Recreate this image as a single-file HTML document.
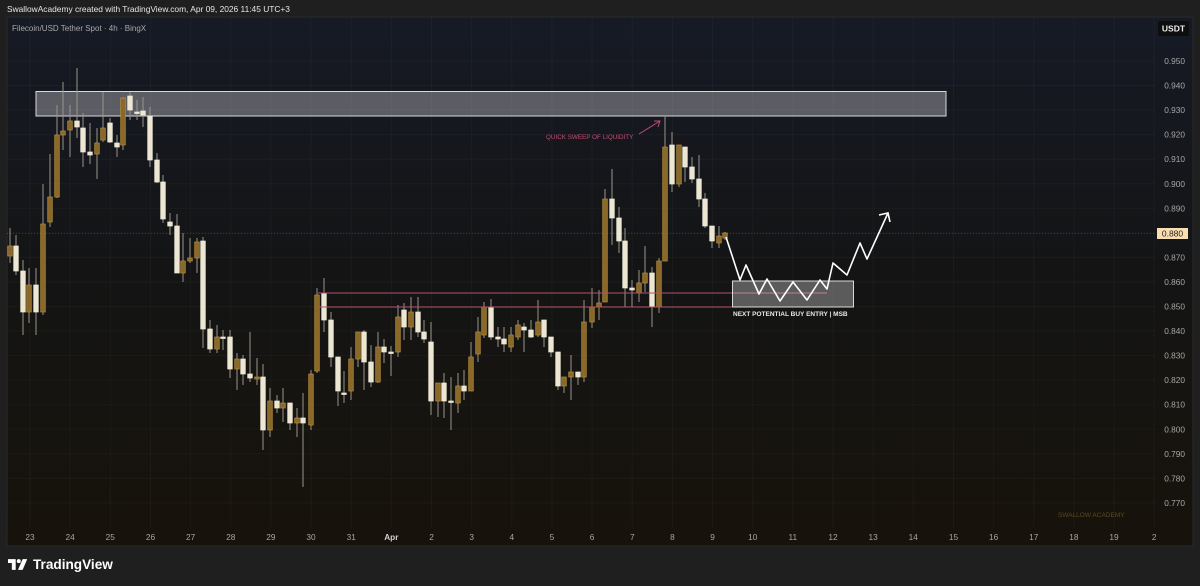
<!DOCTYPE html>
<html><head><meta charset="utf-8">
<style>
html,body{margin:0;padding:0;width:1200px;height:586px;overflow:hidden;background:#1f1f1f;font-family:"Liberation Sans",sans-serif}
#hdr{position:absolute;left:7px;top:4px;font-size:8.4px;color:#e6e6e6}
#logo{position:absolute;left:8px;top:557px;color:#fff;font-weight:bold;font-size:13.6px;display:flex;align-items:center;gap:5px}
</style></head><body>
<div id="hdr">SwallowAcademy created with TradingView.com, Apr 09, 2026 11:45 UTC+3</div>
<svg id="c" width="1200" height="586" style="position:absolute;left:0;top:0" xmlns="http://www.w3.org/2000/svg">
<defs>
<linearGradient id="bg" x1="0" y1="0" x2="0" y2="1">
<stop offset="0" stop-color="#161a25"/><stop offset="0.5" stop-color="#141414"/><stop offset="1" stop-color="#17130b"/>
</linearGradient>
</defs>
<rect x="7" y="17" width="1186" height="529" fill="url(#bg)" stroke="#2a2a2a"/>
<g id="grid" stroke="#ffffff" stroke-opacity="0.03" stroke-width="1"></g>
<text x="12" y="31" font-size="8" fill="#a8a8a8" font-family="Liberation Sans">Filecoin/USD Tether Spot · 4h · BingX</text>
<line x1="7" y1="233.5" x2="1155" y2="233.5" stroke="#f5d9a8" stroke-opacity="0.18" stroke-dasharray="1 2"/>
<rect x="36" y="91.5" width="910" height="24.5" fill="#cfcfd4" fill-opacity="0.38" stroke="#d8d8d8" stroke-width="1"/>
<g id="cand"></g>
<line x1="318" y1="293" x2="827" y2="293" stroke="#b4506c" stroke-width="1"/>
<line x1="318" y1="307" x2="733" y2="307" stroke="#b4506c" stroke-width="1"/>
<rect x="732.5" y="281" width="121" height="26" fill="#cfcfd4" fill-opacity="0.38" stroke="#d8d8d8"/>
<text x="733" y="316" font-size="6.5" font-weight="bold" fill="#e8e8e8" font-family="Liberation Sans">NEXT POTENTIAL BUY ENTRY | MSB</text>
<polyline points="726,237 740,280 746,265 759,294 767,279 780,301 793,282 807,300 820,280 827,289 833,263 847,275 860,243 867,259 888,213" fill="none" stroke="#fff" stroke-width="1.6" stroke-linejoin="round"/>
<polyline points="879,215 888,213 890,222" fill="none" stroke="#fff" stroke-width="1.6"/>
<text x="546" y="139" font-size="6.3" fill="#c54a72" font-family="Liberation Sans">QUICK SWEEP OF LIQUIDITY</text>
<line x1="639" y1="134" x2="660" y2="121" stroke="#c54a72" stroke-width="1"/>
<polyline points="654,121 660,121 658,127" fill="none" stroke="#c54a72" stroke-width="1"/>
<text x="1058" y="517" font-size="6.5" fill="#5c4820" font-family="Liberation Sans">SWALLOW ACADEMY</text>
<g id="axis" font-family="Liberation Sans" font-size="8.3" fill="#a6a6a6"></g>
<rect x="1157" y="228" width="31" height="11" fill="#f8ddb0"/>
<text x="1172.5" y="236.5" font-size="8.5" fill="#222" text-anchor="middle" font-family="Liberation Sans">0.880</text>
<rect x="1158" y="21" width="31" height="15" rx="2" fill="#0e0e0e"/>
<text x="1173.5" y="31.5" font-size="8.5" fill="#eee" text-anchor="middle" font-family="Liberation Sans" font-weight="bold">USDT</text>
</svg>
<div id="logo"><svg width="20" height="11" viewBox="0 0 26 14"><path d="M0 0H10V14H5V5H0Z" fill="#fff"/><circle cx="14" cy="2.6" r="2.6" fill="#fff"/><path d="M19 0H25L19 14H13Z" fill="#fff"/></svg><span>TradingView</span></div>
<script>
const NS="http://www.w3.org/2000/svg";
function el(p,t,a,txt){const e=document.createElementNS(NS,t);for(const k in a)e.setAttribute(k,a[k]);if(txt!==undefined)e.textContent=txt;p.appendChild(e);return e;}
const grid=document.getElementById('grid'),axis=document.getElementById('axis'),cand=document.getElementById('cand');
for(let i=0;i<19;i++){const p=0.95-i*0.01,y=61+i*24.55;el(grid,'line',{x1:7,x2:1155,y1:y,y2:y});el(axis,'text',{x:1185,y:y+3,'text-anchor':'end'},p.toFixed(3));}
const days=['23','24','25','26','27','28','29','30','31','Apr','2','3','4','5','6','7','8','9','10','11','12','13','14','15','16','17','18','19','2'];
days.forEach((d,i)=>{const x=30+i*40.15;el(grid,'line',{x1:x,x2:x,y1:17,y2:528});el(axis,'text',{x:x,y:540,'text-anchor':'middle','font-weight':d=='Apr'?'bold':'normal',fill:d=='Apr'?'#d0d0d0':'#a6a6a6'},d);});
const C=[[10,246,256,228,263,1],[16,246,271,235,275,0],[23,271,312,260,335,0],[29,285,312,268,323,1],[36,285,312,268,335,0],[43,224,312,184,315,1],[50,197,222,154,227,1],[57,135,197,105,198,1],[63,131,135,82,150,1],[70,121,130,105,157,1],[77,121,127,68,138,0],[83,128,152,113,167,0],[90,152,155,123,164,0],[97,143,154,128,179,1],[103,128,140,92,142,1],[110,123,142,118,143,0],[117,143,147,135,157,0],[123,98,145,97,150,1],[130,96,110,92,120,0],[137,112,113,100,120,0],[143,111,115,97,127,0],[150,116,160,107,167,0],[157,160,182,153,183,0],[163,182,219,175,223,0],[170,222,226,213,235,0],[177,226,273,214,273,0],[183,261,273,233,282,1],[190,258,261,238,263,1],[197,242,258,238,273,1],[203,241,329,237,348,0],[210,329,349,320,353,0],[217,337,349,325,353,1],[223,337,338,330,350,0],[230,337,369,330,378,0],[237,359,369,353,390,1],[243,359,374,355,385,0],[250,374,378,332,382,0],[257,377,379,358,385,1],[263,377,430,364,450,0],[270,401,430,388,437,1],[277,401,408,395,413,0],[283,403,408,388,422,1],[290,403,423,407,430,0],[297,418,423,408,437,1],[303,418,423,393,487,0],[311,374,425,370,430,1],[317,295,371,288,373,1],[324,293,320,278,332,0],[331,320,357,312,367,0],[338,357,391,357,406,0],[344,393,394,371,403,0],[351,359,391,347,400,1],[358,332,359,332,367,1],[364,332,362,330,390,0],[371,362,382,345,387,0],[378,347,382,332,383,1],[384,347,352,339,363,0],[391,352,353,346,376,0],[398,317,352,305,357,1],[404,310,327,303,340,0],[411,312,327,297,340,1],[418,312,332,297,337,0],[424,332,339,320,343,0],[431,342,401,322,415,0],[438,383,401,383,417,1],[444,383,401,373,418,0],[451,401,402,377,430,0],[458,386,403,373,413,1],[464,386,391,370,400,0],[471,357,391,342,391,1],[478,332,354,317,362,1],[484,307,335,302,338,1],[491,307,337,299,340,0],[498,337,339,327,347,0],[504,339,344,327,352,0],[511,335,347,327,352,1],[518,325,337,320,340,1],[524,327,330,323,352,0],[531,330,337,320,338,0],[538,322,335,300,337,1],[544,320,337,320,347,0],[551,337,352,337,357,0],[558,352,386,352,390,0],[564,377,386,377,393,1],[571,372,377,355,400,1],[578,372,377,372,385,0],[584,322,377,300,382,1],[592,307,322,288,328,1],[599,303,307,290,320,1],[605,199,302,189,302,1],[612,199,218,169,245,0],[619,218,241,207,253,0],[625,241,288,228,307,0],[632,288,290,280,307,0],[639,283,293,270,302,1],[645,273,283,246,292,1],[652,273,307,267,327,0],[659,261,307,258,313,1],[665,147,261,115,260,1],[672,145,184,132,192,0],[679,145,184,145,187,1],[685,147,167,147,182,0],[692,167,179,157,183,0],[699,179,199,155,207,0],[705,199,226,193,228,0],[712,226,241,226,248,0],[719,236,243,226,248,1],[725,233,238,232,240,1]];
C.forEach(c=>{let [x,t,b,h,l,g]=c;if(t>b)[t,b]=[b,t];if(b-t<1.5)b=t+1.5;
el(cand,'line',{x1:x,x2:x,y1:h,y2:l,stroke:'#9a958a','stroke-width':1});
el(cand,'rect',{x:x-2.3,y:t,width:4.6,height:b-t,fill:g?'#8a6828':'#ece6d2',stroke:g?'#b58d3e':'#f3eedd','stroke-width':0.7});});
</script>
</body></html>
